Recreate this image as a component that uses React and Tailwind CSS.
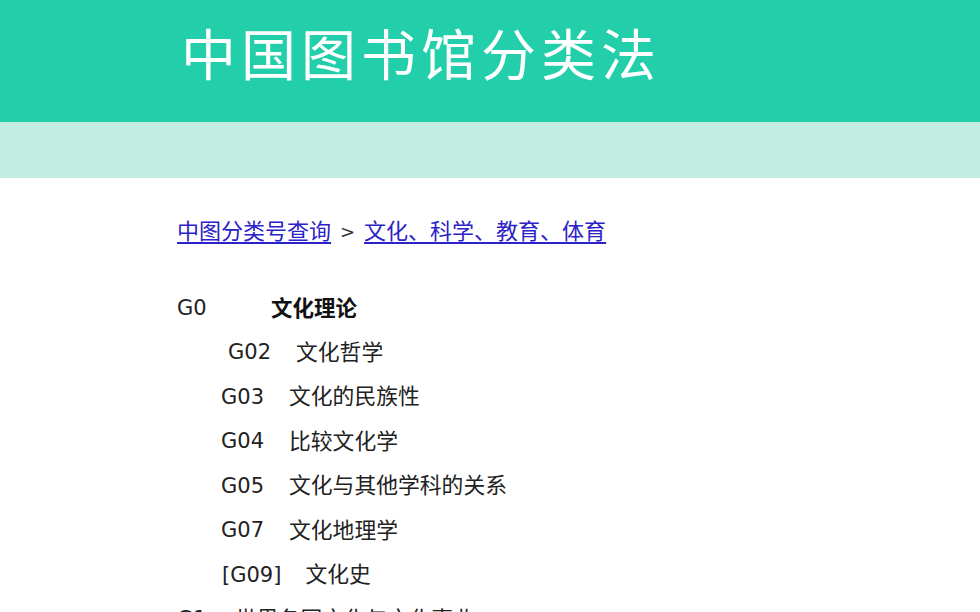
export default function App() {
  const rows = [
    { code: "G02", text: "文化哲学", ml: "ml-[51px]", gap: "gap-[25px]" },
    { code: "G03", text: "文化的民族性", ml: "ml-[44px]", gap: "gap-[25px]" },
    { code: "G04", text: "比较文化学", ml: "ml-[44px]", gap: "gap-[25px]" },
    { code: "G05", text: "文化与其他学科的关系", ml: "ml-[44px]", gap: "gap-[25px]" },
    { code: "G07", text: "文化地理学", ml: "ml-[44px]", gap: "gap-[25px]" },
    { code: "[G09]", text: "文化史", ml: "ml-[45px]", gap: "gap-[24px]" },
  ];
  const font = { fontFamily: '"DejaVu Sans", "Noto Sans CJK SC", sans-serif' };
  return (
    <div className="w-[980px] h-[612px] overflow-hidden bg-white" style={font}>
      <div className="h-[122px] bg-[#22cfaa] flex items-center pl-[181px] pb-[20px]">
        <h1
          className="text-white text-[55px] leading-none tracking-[5px] font-normal"
          style={{ fontFamily: '"Noto Sans CJK SC", sans-serif' }}
        >
          中国图书馆分类法
        </h1>
      </div>
      <div className="h-[56px] bg-[#c3ede2]" />
      <div className="pl-[177px] pt-[39px] text-[#222]">
        <div className="h-[30px] flex items-center text-[22px] leading-none">
          <a href="#" className="text-[#2b22c8] underline underline-offset-[3px] decoration-[1.5px]">
            中图分类号查询
          </a>
          <span className="mx-[9px] text-[18px] text-[#333]">&gt;</span>
          <a href="#" className="text-[#2b22c8] underline underline-offset-[3px] decoration-[1.5px]">
            文化、科学、教育、体育
          </a>
        </div>
        <div className="mt-[39px] h-[44.5px] flex items-center text-[21px] leading-none">
          <span className="w-[94px]">G0</span>
          <span className="font-bold text-[#111] text-[21.5px]">文化理论</span>
        </div>
        {rows.map((r) => (
          <div key={r.code} className={`h-[44.5px] flex items-center text-[21px] leading-none ${r.ml} ${r.gap}`}>
            <span>{r.code}</span>
            <span className="text-[21.8px]">{r.text}</span>
          </div>
        ))}
        <div className="h-[44.5px] flex items-center text-[21px] leading-none">
          <span className="w-[58px]">G1</span>
          <span className="text-[21.8px]">世界各国文化与文化事业</span>
        </div>
      </div>
    </div>
  );
}
